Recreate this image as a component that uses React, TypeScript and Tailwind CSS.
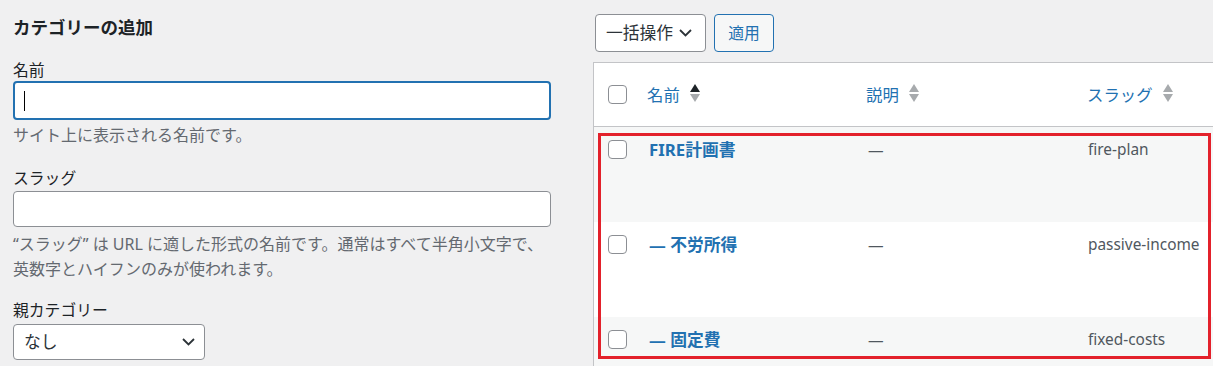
import React from "react";

function SortArrows({ active }: { active?: boolean }) {
  return (
    <svg width="10" height="18" viewBox="0 0 10 18" className="ml-[10px] mt-[-4px] shrink-0">
      <polygon points="5,0 10,8 0,8" fill={active ? "#1d2327" : "#a7aaad"} />
      <polygon points="0,10 10,10 5,18" fill="#a7aaad" />
    </svg>
  );
}

function Chevron({ w = 13, h = 8 }: { w?: number; h?: number }) {
  return (
    <svg width={w} height={h} viewBox="0 0 13 8" className="shrink-0">
      <polyline points="1,1 6.5,6.5 12,1" fill="none" stroke="#2c3338" strokeWidth="1.8" />
    </svg>
  );
}

function Checkbox() {
  return <div className="w-[19px] h-[19px] rounded-[4px] border border-[#8c8f94] bg-white" />;
}

const rows = [
  { name: "FIRE計画書", slug: "fire-plan", bg: "bg-[#f6f7f7]" },
  { name: "— 不労所得", slug: "passive-income", bg: "bg-white" },
  { name: "— 固定費", slug: "fixed-costs", bg: "bg-[#f6f7f7]" },
];

export default function App() {
  return (
    <div className="w-[1213px] h-[366px] overflow-hidden bg-[#f0f0f1] flex font-['Noto_Sans','Noto_Sans_CJK_JP',sans-serif]">
      {/* Left column */}
      <div className="w-[593px] shrink-0 pl-[13px]">
        <h2 className="pt-[15px] text-[17.5px] leading-[24px] font-semibold text-[#1d2327]">
          カテゴリーの追加
        </h2>

        <div className="mt-[20px]">
          <label className="block text-[15.8px] leading-[22px] text-[#1d2327]">名前</label>
          <div className="h-[39px] w-[538px] rounded-[4px] border-2 border-[#2271b1] bg-white flex items-center pl-[9px]">
            <span className="block w-px h-[20px] bg-black" />
          </div>
          <p className="mt-[4px] text-[16px] leading-[22px] text-[#646970]">
            サイト上に表示される名前です。
          </p>
        </div>

        <div className="mt-[21px]">
          <label className="block text-[15.8px] leading-[22px] text-[#1d2327]">スラッグ</label>
          <div className="mt-[2px] h-[36px] w-[538px] rounded-[4px] border border-[#8c8f94] bg-white" />
          <p className="mt-[5px] text-[16px] leading-[25px] text-[#646970] whitespace-nowrap">
            “スラッグ” は URL に適した形式の名前です。通常はすべて半角小文字で、
            <br />
            英数字とハイフンのみが使われます。
          </p>
        </div>

        <div className="mt-[17px]">
          <label className="block text-[15.8px] leading-[22px] text-[#1d2327]">親カテゴリー</label>
          <div className="mt-[3px] h-[36px] w-[192px] rounded-[4px] border border-[#8c8f94] bg-white flex items-center justify-between pl-[10px] pr-[9px]">
            <span className="text-[16.8px] leading-[24px] text-[#2c3338]">なし</span>
            <Chevron />
          </div>
        </div>
      </div>

      {/* Right column */}
      <div className="flex-1 min-w-0">
        <div className="pt-[14px] pl-[2px] flex items-center">
          <div className="h-[38px] w-[111px] rounded-[4px] border border-[#8c8f94] bg-white flex items-center pl-[10px]">
            <span className="text-[16.8px] leading-[24px] text-[#2c3338] whitespace-nowrap">一括操作</span>
            <span className="ml-[6px] flex items-center">
              <Chevron />
            </span>
          </div>
          <div className="ml-[8px] h-[38px] w-[60px] rounded-[4px] border border-[#2271b1] bg-[#f6f7f7] flex items-center justify-center">
            <span className="text-[15.8px] leading-[22px] text-[#2271b1]">適用</span>
          </div>
        </div>

        <div className="relative mt-[10px] border-l border-t border-[#c3c4c7] bg-white w-[640px]">
          {/* Header */}
          <div className="grid grid-cols-[53px_219px_221px_1fr] h-[64px] items-center border-b border-[#c3c4c7] bg-white">
            <div className="pl-[14px]">
              <Checkbox />
            </div>
            <div className="flex items-center text-[16.4px] leading-[22px] text-[#2271b1]">
              名前
              <SortArrows active />
            </div>
            <div className="flex items-center text-[16.4px] leading-[22px] text-[#2271b1]">
              説明
              <SortArrows />
            </div>
            <div className="flex items-center text-[16.4px] leading-[22px] text-[#2271b1]">
              スラッグ
              <SortArrows />
            </div>
          </div>

          {/* Rows */}
          {rows.map((r) => (
            <div key={r.slug} className={`grid grid-cols-[53px_219px_221px_1fr] h-[95px] ${r.bg}`}>
              <div className="pl-[14px] pt-[13px]">
                <Checkbox />
              </div>
              <div className="pt-[11px] pl-[2px] text-[16.8px] leading-[24px] font-bold text-[#2271b1] whitespace-nowrap">
                {r.name}
              </div>
              <div className="pt-[11px] pl-[2px] text-[15.6px] leading-[24px] text-[#50575e]">—</div>
              <div className="pt-[11px] pl-[1px] text-[15.4px] leading-[24px] text-[#50575e] whitespace-nowrap">
                {r.slug}
              </div>
            </div>
          ))}

          {/* Red highlight annotation */}
          <div className="absolute left-[4px] top-[70px] w-[613px] h-[226px] border-[3px] border-[#e3212b] pointer-events-none" />
        </div>
      </div>
    </div>
  );
}
